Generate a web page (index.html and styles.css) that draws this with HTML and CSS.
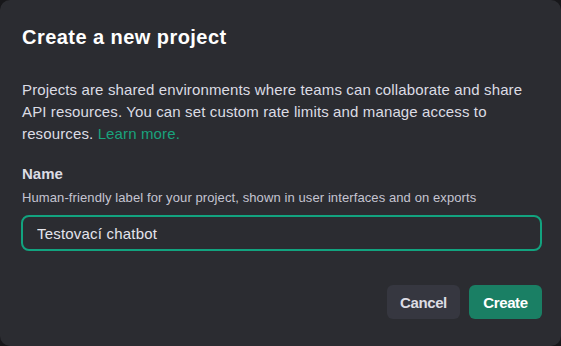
FILE: index.html
```html
<!DOCTYPE html>
<html lang="en">
<head>
    <meta charset="UTF-8">
    <meta name="viewport" content="width=device-width, initial-scale=1.0">
    <title>Create a new project</title>
    <link rel="stylesheet" href="styles.css">
</head>
<body>

    <div class="dialog">
        <h1 class="dialog-title">Create a new project</h1>

        <p class="dialog-text">
            Projects are shared environments where teams can collaborate and share
            API resources. You can set custom rate limits and manage access to
            resources. <a href="#" class="link">Learn more.</a>
        </p>

        <div class="field">
            <label class="field-label" for="projectName">Name</label>
            <div class="field-hint">Human-friendly label for your project, shown in user interfaces and on exports</div>
            <input type="text" id="projectName" class="field-input" value="Testovací chatbot" />
        </div>

        <div class="actions">
            <button class="btn btn-cancel">Cancel</button>
            <button class="btn btn-create">Create</button>
        </div>
    </div>

</body>
</html>
```

FILE: styles.css
```css
body {
    margin: 0;
    padding: 0;
    background-color: #17171a;
    font-family: "Liberation Sans", Arial, sans-serif;
    color: #ececf1;
}
.dialog {
    box-sizing: border-box;
    width: 561px;
    height: 346px;
    padding: 23px 19px 0 21px;
    background-color: #2b2c31;
    border-radius: 10px;
}
.dialog-title {
    margin: 0 0 0 1px;
    font-size: 20px;
    line-height: 28px;
    font-weight: bold;
    letter-spacing: 0.45px;
    color: #ffffff;
}
.dialog-text {
    margin: 28px 0 0 1px;
    font-size: 15px;
    line-height: 22px;
    letter-spacing: 0.13px;
    color: #dcdce4;
}
.link {
    color: #19a37d;
    text-decoration: none;
}
.field {
    margin-top: 18px;
}
.field-label {
    display: block;
    margin-left: 1px;
    font-size: 15px;
    line-height: 22px;
    font-weight: bold;
    color: #dcdce4;
}
.field-hint {
    margin: 4px 0 0 1px;
    font-size: 13px;
    line-height: 18px;
    letter-spacing: 0.1px;
    color: #c5c5d2;
}
.field-input {
    box-sizing: border-box;
    display: block;
    width: 100%;
    height: 36px;
    margin-top: 8px;
    padding: 0 14px;
    border: 2px solid #12a37f;
    border-radius: 8px;
    background-color: #2b2c31;
    font-family: "Liberation Sans", Arial, sans-serif;
    font-size: 15px;
    letter-spacing: 0.2px;
    color: #e4e4ec;
    outline: none;
}
.actions {
    display: flex;
    justify-content: flex-end;
    gap: 9px;
    margin-top: 34px;
}
.btn {
    min-width: 73px;
    height: 34px;
    padding: 0 13px;
    border: none;
    border-radius: 6px;
    font-family: "Liberation Sans", Arial, sans-serif;
    font-size: 15px;
    font-weight: bold;
    letter-spacing: -0.4px;
    cursor: pointer;
}
.btn-cancel {
    background-color: #363740;
    color: #dcdce4;
}
.btn-create {
    background-color: #1a7f64;
    color: #ffffff;
}
```
